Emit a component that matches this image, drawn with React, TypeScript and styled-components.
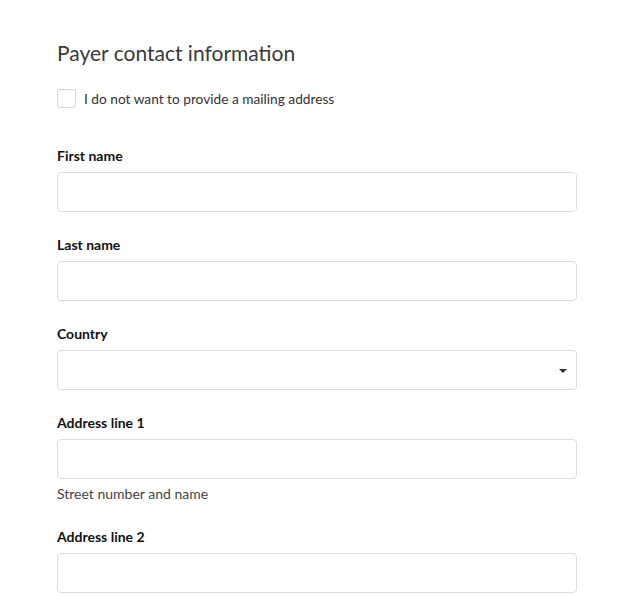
import React from "react";
import styled, { createGlobalStyle } from "styled-components";

const Global = createGlobalStyle`
  html, body { margin: 0; padding: 0; background: #fff; }
  body { font-family: Lato, "Open Sans", sans-serif; color: #333; }
  * { box-sizing: border-box; }
`;

const Page = styled.div`
  width: 520px;
  margin-left: 57px;
  padding-top: 38px;
`;

const Title = styled.h2`
  margin: 0;
  font-size: 21px;
  font-weight: 400;
  line-height: 30px;
  color: #3a3a3a;
`;

const CheckRow = styled.label`
  display: flex;
  align-items: center;
  gap: 8px;
  margin-top: 20px;
  font-size: 13.7px;
  color: #333;
  height: 20px;
`;

const Box = styled.span`
  width: 19px;
  height: 19px;
  border: 1px solid #d6d6d6;
  border-radius: 3px;
  background: #fff;
`;

const Field = styled.div<{ $first?: boolean }>`
  display: flex;
  flex-direction: column;
  margin-top: ${(p) => (p.$first ? "38px" : "23px")};
`;

const Label = styled.span`
  font-size: 14px;
  font-weight: 700;
  line-height: 20px;
  color: #111;
  margin-bottom: 6px;
`;

const Input = styled.div`
  position: relative;
  height: 40px;
  border: 1px solid #dcdcdc;
  border-radius: 4px;
  background: #fff;
`;

const Caret = styled.span`
  position: absolute;
  right: 9px;
  top: 18px;
  width: 0;
  height: 0;
  border-left: 4px solid transparent;
  border-right: 4px solid transparent;
  border-top: 4px solid #333;
`;

const Help = styled.span`
  font-size: 14px;
  line-height: 20px;
  color: #444;
  margin-top: 5px;
`;

export default function App() {
  return (
    <>
      <Global />
      <Page>
        <Title>Payer contact information</Title>
        <CheckRow>
          <Box />
          I do not want to provide a mailing address
        </CheckRow>
        <Field $first>
          <Label>First name</Label>
          <Input />
        </Field>
        <Field>
          <Label>Last name</Label>
          <Input />
        </Field>
        <Field>
          <Label>Country</Label>
          <Input>
            <Caret />
          </Input>
        </Field>
        <Field>
          <Label>Address line 1</Label>
          <Input />
          <Help>Street number and name</Help>
        </Field>
        <Field>
          <Label>Address line 2</Label>
          <Input />
        </Field>
      </Page>
    </>
  );
}
